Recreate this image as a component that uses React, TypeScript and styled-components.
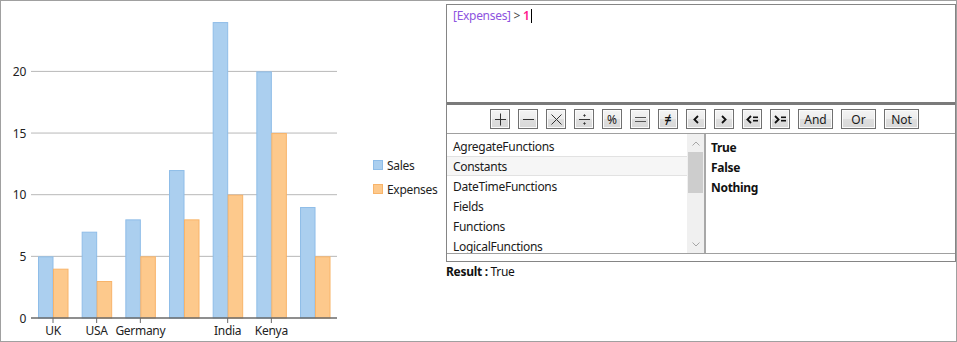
import React from 'react'
import styled, { createGlobalStyle } from 'styled-components'

const GlobalStyle = createGlobalStyle`
  html, body { margin: 0; padding: 0; background: #fff; }
  body { font-family: "Segoe UI", "Noto Sans", "Open Sans", sans-serif; font-size: 12px; letter-spacing: -0.3px; color: #000; }
`

// data
const categories = ['UK', 'USA', 'Germany', '', 'India', 'Kenya', '']
const sales = [5, 7, 8, 12, 24, 20, 9]
const expenses = [4, 3, 5, 8, 10, 15, 5]
const groups = ['AgregateFunctions', 'Constants', 'DateTimeFunctions', 'Fields', 'Functions', 'LogicalFunctions']
const constants = ['True', 'False', 'Nothing']

// css
const Frame = styled.div`
  width: 957px;
  height: 342px;
  box-sizing: border-box;
  border: 1px solid #a0a0a0;
  display: flex;
  overflow: hidden;
`
const ChartPane = styled.div`
  width: 445px;
  display: flex;
  align-items: flex-start;
`
const Legend = styled.div`
  margin-left: 27px;
  padding-top: 156px;
  display: flex;
  flex-direction: column;
  gap: 8px;
`
const LegendItem = styled.div`
  display: flex;
  align-items: center;
  gap: 4px;
  height: 16px;
  color: #1e1e1e;
`
const Swatch = styled.span<{ $fill: string; $stroke: string }>`
  width: 10px;
  height: 10px;
  box-sizing: border-box;
  background: ${p => p.$fill};
  border: 1px solid ${p => p.$stroke};
`
const RightPane = styled.div`
  flex: 1;
  padding-top: 3px;
  display: flex;
  flex-direction: column;
`
const ExprBox = styled.div`
  height: 258px;
  box-sizing: border-box;
  border: 1px solid #858585;
  display: flex;
  flex-direction: column;
`
const Editor = styled.div`
  height: 97px;
  box-sizing: border-box;
  padding: 2px 6px;
  line-height: 18px;
  white-space: pre;
`
const Field = styled.span`color: #8e54e0;`
const Op = styled.span`color: #444;`
const Num = styled.span`color: #ff1a8c; font-weight: 600;`
const Caret = styled.span`
  display: inline-block;
  width: 1px;
  height: 14px;
  background: #000;
  vertical-align: -3px;
  margin-left: 1px;
`
const Splitter = styled.div`
  height: 3px;
  background: #7a7a7a;
`
const Toolbar = styled.div`
  height: 28px;
  border-bottom: 1px solid #a0a0a0;
  display: flex;
  align-items: center;
  justify-content: center;
  gap: 8px;
  padding-left: 7px;
`
const OpButton = styled.button<{ $wide?: boolean }>`
  width: ${p => (p.$wide ? '35px' : '20px')};
  height: 20px;
  padding: 0;
  box-sizing: border-box;
  border: 1px solid #707070;
  background: linear-gradient(#f4f4f4 0%, #ececec 50%, #dedede 51%, #d8d8d8 100%);
  box-shadow: inset 0 0 0 1px #fbfbfb;
  font-family: inherit;
  font-size: 12px;
  letter-spacing: 0;
  color: #1a1a1a;
  display: flex;
  align-items: center;
  justify-content: center;
  gap: 1px;
`
const BoldGlyph = styled.span`
  font-weight: 800;
  font-size: 12px;
  color: #111;
`
const Lists = styled.div`
  height: 119px;
  border-bottom: 1px solid #a0a0a0;
  display: flex;
`
const GroupList = styled.div`
  width: 257px;
  display: flex;
  border-right: 2px solid #a8a8a8;
  overflow: hidden;
`
const Items = styled.div`
  flex: 1;
  padding-top: 2px;
`
const Item = styled.div<{ $selected?: boolean }>`
  height: 20px;
  box-sizing: border-box;
  padding-top: 2px;
  line-height: 16px;
  padding-left: 6px;
  color: #1a1a1a;
  background: ${p => (p.$selected ? '#f6f6f6' : 'transparent')};
  border-top: 1px solid ${p => (p.$selected ? '#e2e2e2' : 'transparent')};
  border-bottom: 1px solid ${p => (p.$selected ? '#e2e2e2' : 'transparent')};
`
const ScrollBar = styled.div`
  width: 17px;
  background: #f0f0f0;
  display: flex;
  flex-direction: column;
  align-items: center;
`
const ScrollArrow = styled.div`
  height: 18px;
  display: flex;
  align-items: center;
  justify-content: center;
`
const Thumb = styled.div`
  width: 15px;
  height: 41px;
  background: #cdcdcd;
`
const ScrollTrack = styled.div`
  flex: 1;
`
const ConstList = styled.div`
  flex: 1;
  padding-top: 4px;
`
const ConstItem = styled.div`
  height: 20px;
  line-height: 19px;
  padding-left: 5px;
  font-weight: 700;
  color: #111;
`
const ResultRow = styled.div`
  margin-top: 1px;
  color: #111;
`

// template
const Glyph: React.FC<{ kind: string }> = ({ kind }) => (
  <svg width="13" height="13" viewBox="0 0 13 13" stroke="#333" strokeWidth="1" fill="none">
    {kind === 'plus' && <path d="M1 6.5H12M6.5 0.5V12.5" />}
    {kind === 'minus' && <path d="M1 6.5H12" />}
    {kind === 'times' && <path d="M1.5 1.5L11.5 11.5M11.5 1.5L1.5 11.5" />}
    {kind === 'div' && (
      <>
        <path d="M1 6.5H12" />
        <circle cx="6.5" cy="2.5" r="0.7" fill="#333" />
        <circle cx="6.5" cy="10.5" r="0.7" fill="#333" />
      </>
    )}
    {kind === 'eq' && <path d="M1 4.5H12M1 8.5H12" stroke="#555" />}
  </svg>
)

// bold chevron used by the comparison buttons
const Angle: React.FC<{ right?: boolean }> = ({ right }) => (
  <svg width="6" height="9" viewBox="0 0 6 9" fill="none" stroke="#111" strokeWidth="1.8">
    <path d={right ? 'M1 1L4.6 4.5L1 8' : 'M5 1L1.4 4.5L5 8'} />
  </svg>
)

const Bars: React.FC = () => (
  <svg width="5" height="6" viewBox="0 0 5 6" fill="#111">
    <rect x="0" y="0.5" width="5" height="1.6" />
    <rect x="0" y="3.9" width="5" height="1.6" />
  </svg>
)

const Chevron: React.FC<{ up?: boolean }> = ({ up }) => (
  <svg width="8" height="5" viewBox="0 0 8 5" fill="none" stroke="#a6a6a6" strokeWidth="1">
    <path d={up ? 'M0.5 4.5L4 1L7.5 4.5' : 'M0.5 0.5L4 4L7.5 0.5'} />
  </svg>
)

const yOf = (v: number) => 318 - v * 12.33

const BarChart: React.FC = () => (
  <svg width="345" height="340" viewBox="1 1 345 340" fontFamily='"Segoe UI", "Noto Sans", sans-serif' fontSize="12">
    {[5, 10, 15, 20].map(v => (
      <line key={v} x1="31" x2="337" y1={yOf(v)} y2={yOf(v)} stroke="#b8b8b8" strokeWidth="1" />
    ))}
    {[0, 5, 10, 15, 20].map(v => (
      <text key={v} x="26" y={yOf(v) + 4.5} textAnchor="end" fill="#222">{v}</text>
    ))}
    {sales.map((s, i) => {
      const x = 38 + i * 43.67
      const e = expenses[i]
      return (
        <g key={i}>
          <rect x={x + 0.5} y={yOf(s) + 0.5} width="14.5" height={s * 12.33 - 0.5} fill="#abcfef" stroke="#8fbde8" />
          <rect x={x + 15.5} y={yOf(e) + 0.5} width="14.5" height={e * 12.33 - 0.5} fill="#fdc98c" stroke="#f8b46a" />
        </g>
      )
    })}
    <line x1="31" x2="337" y1="318" y2="318" stroke="#6a6a6a" strokeWidth="1.6" />
    {categories.map((c, i) => {
      const cx = 38 + i * 43.67 + 15
      return c ? (
        <g key={i}>
          <line x1={cx} x2={cx} y1="318" y2="323" stroke="#6a6a6a" />
          <text x={cx} y="335" textAnchor="middle" fill="#222">{c}</text>
        </g>
      ) : null
    })}
  </svg>
)

const App: React.FC = () => {
  const symbolOps = ['plus', 'minus', 'times', 'div']
  return (
    <>
      <GlobalStyle />
      <Frame>
        <ChartPane>
          <BarChart />
          <Legend>
            <LegendItem><Swatch $fill="#abcfef" $stroke="#8fbde8" />Sales</LegendItem>
            <LegendItem><Swatch $fill="#fdc98c" $stroke="#f8b46a" />Expenses</LegendItem>
          </Legend>
        </ChartPane>
        <RightPane>
          <ExprBox>
            <Editor>
              <Field>[Expenses]</Field> <Op>&gt;</Op> <Num>1</Num><Caret />
            </Editor>
            <Splitter />
            <Toolbar>
              {symbolOps.map(k => (
                <OpButton key={k} title={k}><Glyph kind={k} /></OpButton>
              ))}
              <OpButton>%</OpButton>
              <OpButton title="eq"><Glyph kind="eq" /></OpButton>
              <OpButton><BoldGlyph>≠</BoldGlyph></OpButton>
              <OpButton title="lt"><Angle /></OpButton>
              <OpButton title="gt"><Angle right /></OpButton>
              <OpButton title="le"><Angle /><Bars /></OpButton>
              <OpButton title="ge"><Angle right /><Bars /></OpButton>
              <OpButton $wide>And</OpButton>
              <OpButton $wide>Or</OpButton>
              <OpButton $wide>Not</OpButton>
            </Toolbar>
            <Lists>
              <GroupList>
                <Items>
                  {groups.map(g => (
                    <Item key={g} $selected={g === 'Constants'}>{g}</Item>
                  ))}
                </Items>
                <ScrollBar>
                  <ScrollArrow><Chevron up /></ScrollArrow>
                  <Thumb />
                  <ScrollTrack />
                  <ScrollArrow><Chevron /></ScrollArrow>
                </ScrollBar>
              </GroupList>
              <ConstList>
                {constants.map(c => <ConstItem key={c}>{c}</ConstItem>)}
              </ConstList>
            </Lists>
          </ExprBox>
          <ResultRow><b>Result :</b> True</ResultRow>
        </RightPane>
      </Frame>
    </>
  )
}

export default App
